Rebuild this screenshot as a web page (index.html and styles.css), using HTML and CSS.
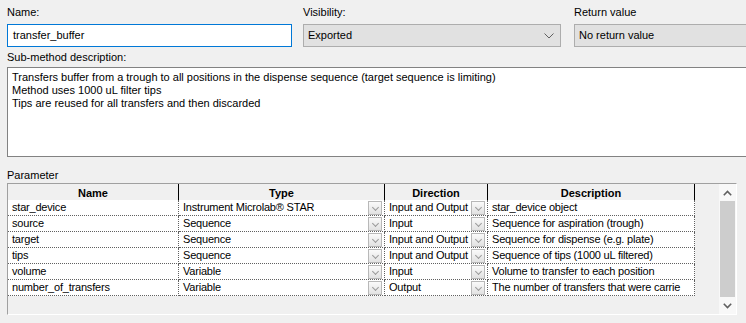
FILE: index.html
```html
<!DOCTYPE html>
<html lang="en">

<head>
  <meta charset="UTF-8">
  <meta name="viewport" content="width=device-width, initial-scale=1.0">
  <link rel="stylesheet" href="styles.css">
  <title>Sub-method</title>
</head>
<body>
  <div class="dialog">
    <div class="fields">
      <div class="field name">
        <label class="lbl">Name:</label>
        <div class="input focus">transfer_buffer</div>
      </div>
      <div class="field vis">
        <label class="lbl">Visibility:</label>
        <div class="select">
          <span>Exported</span>
          <svg width="10" height="6" viewBox="0 0 10 6"><path d="M0.5 0.5 L5 5 L9.5 0.5" fill="none" stroke="#606060" stroke-width="1"/></svg>
        </div>
      </div>
      <div class="field ret">
        <label class="lbl">Return value</label>
        <div class="select">No return value</div>
      </div>
    </div>

    <label class="lbl desc">Sub-method description:</label>
    <div class="textarea">
      <div>Transfers buffer from a trough to all positions in the dispense sequence (target sequence is limiting)</div>
      <div>Method uses 1000 uL filter tips</div>
      <div>Tips are reused for all transfers and then discarded</div>
    </div>

    <label class="lbl param">Parameter</label>
    <div class="grid">
      <div class="table">
        <div class="th">Name</div>
        <div class="th">Type</div>
        <div class="th">Direction</div>
        <div class="th">Description</div>

        <div class="td">star_device</div>
        <div class="td drop">Instrument Microlab® STAR<i class="btn"></i></div>
        <div class="td drop">Input and Output<i class="btn"></i></div>
        <div class="td">star_device object</div>

        <div class="td">source</div>
        <div class="td drop">Sequence<i class="btn"></i></div>
        <div class="td drop">Input<i class="btn"></i></div>
        <div class="td">Sequence for aspiration (trough)</div>

        <div class="td">target</div>
        <div class="td drop">Sequence<i class="btn"></i></div>
        <div class="td drop">Input and Output<i class="btn"></i></div>
        <div class="td">Sequence for dispense (e.g. plate)</div>

        <div class="td">tips</div>
        <div class="td drop">Sequence<i class="btn"></i></div>
        <div class="td drop">Input and Output<i class="btn"></i></div>
        <div class="td">Sequence of tips (1000 uL filtered)</div>

        <div class="td">volume</div>
        <div class="td drop">Variable<i class="btn"></i></div>
        <div class="td drop">Input<i class="btn"></i></div>
        <div class="td">Volume to transfer to each position</div>

        <div class="td">number_of_transfers</div>
        <div class="td drop">Variable<i class="btn"></i></div>
        <div class="td drop">Output<i class="btn"></i></div>
        <div class="td">The number of transfers that were carrie</div>
      </div>
      <div class="scroll">
        <div class="arrow">
          <svg width="9" height="6" viewBox="0 0 9 6"><path d="M0.8 5.2 L4.5 1.5 L8.2 5.2" fill="none" stroke="#606060" stroke-width="1.6"/></svg>
        </div>
        <div class="thumb"></div>
        <div class="arrow">
          <svg width="9" height="6" viewBox="0 0 9 6"><path d="M0.8 0.8 L4.5 4.5 L8.2 0.8" fill="none" stroke="#606060" stroke-width="1.6"/></svg>
        </div>
      </div>
    </div>
  </div>
</body>
</html>
```

FILE: styles.css
```css
* {
  margin: 0;
  padding: 0;
  box-sizing: border-box
}

body {
  background: #f0f0f0;
  overflow: hidden;
  font-family: "Liberation Sans", Arial, sans-serif;
  font-size: 11px;
  color: #000
}

.dialog {
  width: 820px;
  padding: 4px 0 0 7px
}

.lbl {
  display: block;
  height: 16px;
  line-height: 16px
}

.fields {
  display: flex;
  gap: 11px
}

.field .lbl {
  margin-bottom: 4px
}

.name {
  width: 285px
}

.vis {
  width: 258px
}

.ret {
  width: 220px;
  margin-left: 2px
}

.input,
.select {
  height: 23px;
  line-height: 21px;
  padding: 0 4px;
  border: 1px solid #adadad;
  white-space: nowrap
}

.input {
  background: #fff;
  padding-left: 5px
}

.input.focus {
  border-color: #0078d7
}

.select {
  background: #e1e1e1;
  display: flex;
  justify-content: space-between;
  align-items: center;
  padding: 0 6px 0 4px
}

.desc {
  margin-top: 2px
}

.textarea {
  margin: 2px 0 0;
  height: 90px;
  background: #fff;
  border: 1px solid #828282;
  padding: 3px 4px;
  line-height: 13px
}

.param {
  margin-top: 10px
}

.grid {
  width: 730px;
  height: 132px;
  border: 1px solid #a0a0a0;
  border-right-color: #fff;
  border-bottom-color: #fff;
  display: flex;
  justify-content: space-between
}

.table {
  display: grid;
  grid-template-columns: 171px 206px 103px 207px;
  grid-auto-rows: 16px;
  align-self: flex-start
}

.th {
  height: 19px;
  line-height: 18px;
  text-align: center;
  font-weight: bold;
  border-right: 1px solid #000;
  border-bottom: 1px solid #000;
  background: #f0f0f0
}

.td {
  background: #fff;
  border-right: 1px dotted #606060;
  border-bottom: 1px dotted #606060;
  padding-left: 4px;
  line-height: 15px;
  white-space: nowrap;
  overflow: hidden;
  letter-spacing: -0.2px
}

.drop {
  display: flex;
  justify-content: space-between;
  align-items: center
}

.btn {
  flex: none;
  width: 14px;
  height: 14px;
  margin-right: 2px;
  border: 1px solid #b8b8b8;
  background: linear-gradient(#fafafa, #e2e2e2);
  position: relative
}

.btn::after {
  content: "";
  position: absolute;
  left: 4px;
  top: 3px;
  width: 4px;
  height: 4px;
  border-right: 1px solid #9a9a9a;
  border-bottom: 1px solid #9a9a9a;
  transform: rotate(45deg)
}

.scroll {
  width: 17px;
  display: flex;
  flex-direction: column;
  background: #f8f8f8
}

.arrow {
  height: 17px;
  display: flex;
  align-items: center;
  justify-content: center
}

.thumb {
  flex: 1;
  margin: 0 1px;
  background: #cdcdcd
}
```
